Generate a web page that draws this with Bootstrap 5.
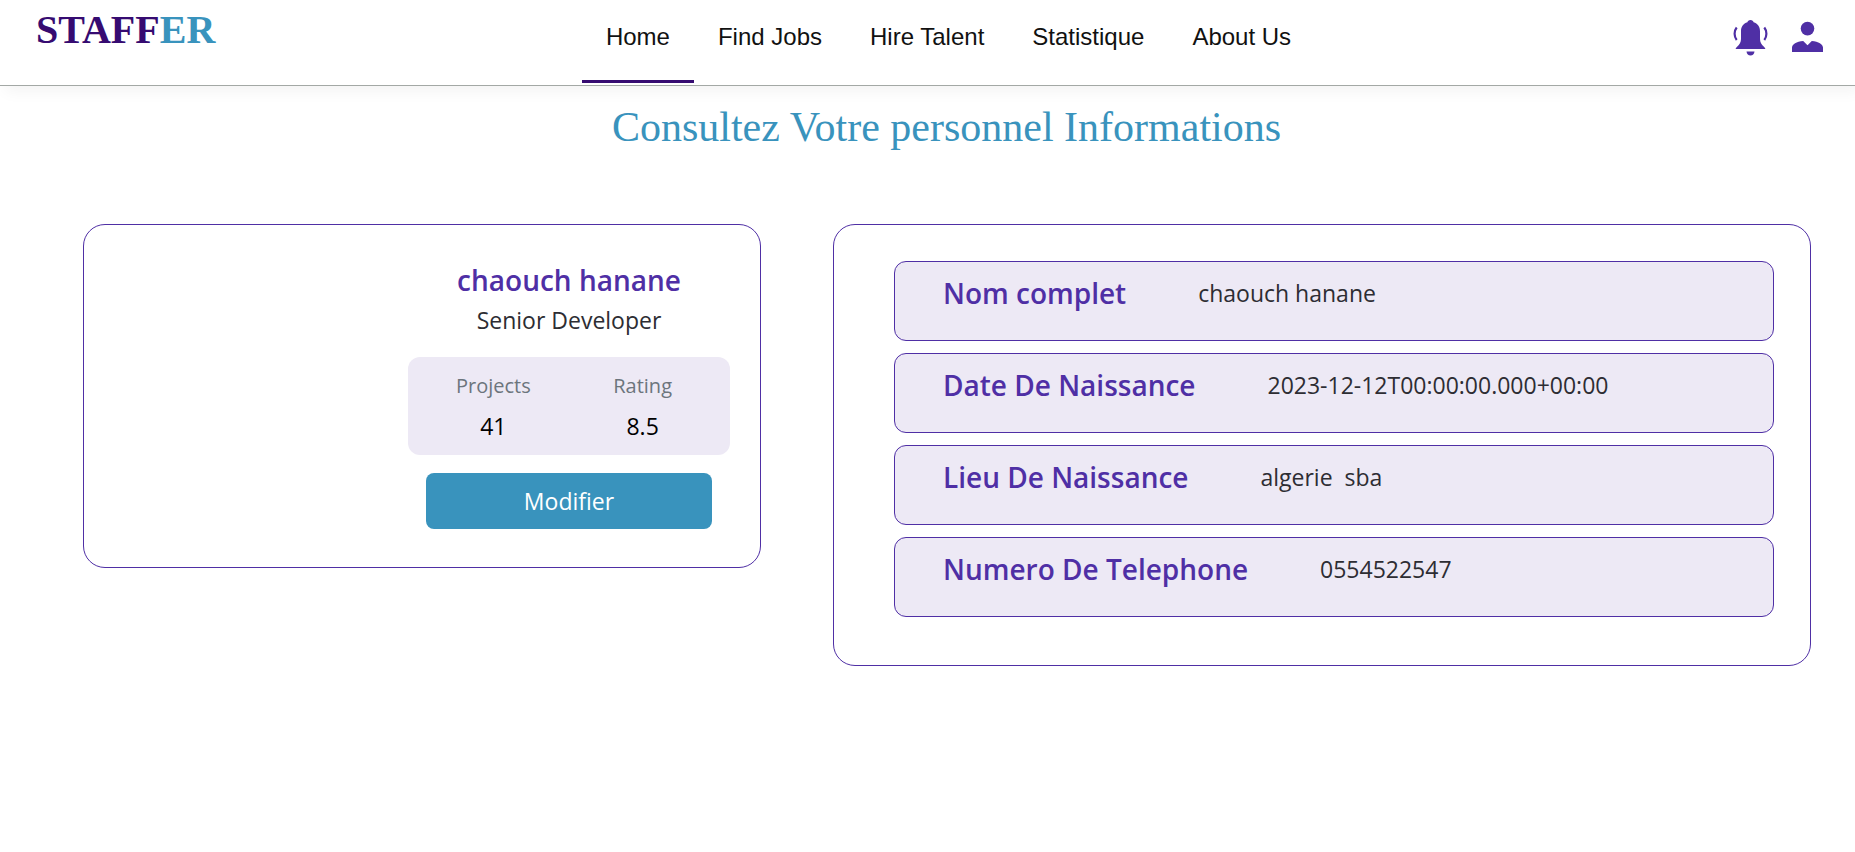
<!DOCTYPE html>
<html lang="fr">
<head>
<meta charset="utf-8">
<meta name="viewport" content="width=device-width, initial-scale=1">
<title>Staffer</title>
<link href="https://cdn.jsdelivr.net/npm/bootstrap@5.3.0/dist/css/bootstrap.min.css" rel="stylesheet">
<style>
  :root { --violet: #4f2fa5; --indigo: #360b71; --sky: #3993bd; --lilac: #ede9f5; }
  body { font-family: "Open Sans", "Noto Sans", sans-serif; color: #2d2d33; background: #fff; }

  .topbar { height: 86px; padding: 0 32px 0 36px; border-bottom: 1px solid #a3a8a5; box-shadow: 5px 5px 15px rgba(0, 0, 0, .05); }
  .topbar-side { flex: 1 1 0; }
  .brand { font: bold 40px/44px "Liberation Serif", serif; color: var(--indigo); margin-top: 8px; }
  .brand span { color: var(--sky); }
  .menu { padding-left: 38px; }
  .menu-link { display: block; height: 83px; padding: 22px 24px 0; font: 24px/30px "Liberation Sans", sans-serif; color: #111; text-decoration: none; border-bottom: 3px solid transparent; white-space: nowrap; }
  .menu-link.active { border-color: var(--indigo); }
  .icon-btn { color: var(--violet); line-height: 0; }

  .page-title { font: 42px/50px "Liberation Serif", serif; color: var(--sky); margin: 16px 0 72px; padding-left: 38px; }
  .panels { display: grid; grid-template-columns: 678fr 978fr; gap: 72px; align-items: start; padding: 0 44px 40px 83px; }
  .panel { border: 1px solid var(--violet); border-radius: 22px; }

  .profile { padding: 35px 30px 38px; }
  .profile-body { width: 322px; }
  .title-text { font-size: 28px; line-height: 40px; font-weight: 600; color: var(--violet); margin: 0; }
  .value-text { font-size: 23px; line-height: 40px; margin: 0; }
  .stats { background: var(--lilac); border-radius: 12px; padding: 8px 58px 8px 48px; margin: 17px 0 18px; }
  .stats dt { font-size: 20px; line-height: 41px; font-weight: 400; color: #6c757d; }
  .stats dd { font-size: 23px; line-height: 41px; color: #000; margin: 0; }
  .btn-edit { --bs-btn-color: #fff; --bs-btn-bg: var(--sky); --bs-btn-hover-color: #fff; --bs-btn-hover-bg: #2f7fa5; --bs-btn-font-size: 23px; --bs-btn-border-width: 0; --bs-btn-border-radius: 8px; width: 286px; height: 56px; }

  .details { padding: 36px 36px 48px 60px; gap: 12px; }
  .detail-row { height: 80px; padding: 11px 48px; gap: 72px; background: var(--lilac); border: 1px solid var(--violet); border-radius: 12px; }
</style>
</head>
<body>
<header class="topbar d-flex">
  <div class="topbar-side">
    <a class="brand d-inline-block text-decoration-none" href="#">STAFF<span>ER</span></a>
  </div>
  <nav class="menu d-flex" aria-label="Menu principal">
    <a class="menu-link active" href="#" aria-current="page">Home</a>
    <a class="menu-link" href="#">Find Jobs</a>
    <a class="menu-link" href="#">Hire Talent</a>
    <a class="menu-link" href="#">Statistique</a>
    <a class="menu-link" href="#">About Us</a>
  </nav>
  <div class="topbar-side d-flex justify-content-end align-items-start gap-4 pt-3">
    <button class="icon-btn btn p-0 border-0" type="button" aria-label="Notifications">
      <svg width="35" height="42" viewBox="0 0 35 42" fill="currentColor">
        <path d="M17.500 4c-1.700 0-2.900 1-3.100 2.300C10.300 7.400 8 10.900 8 15v8c0 3.500-1.500 5.300-3.700 7.500-.9.900-1.600 1.500-1.600 2.500h29.600c0-1-.7-1.600-1.600-2.500C28.500 28.300 27 26.500 27 23v-8c0-4.100-2.300-7.600-6.400-8.700C20.400 5 19.200 4 17.500 4z"/>
        <path d="M13.500 35.500h8c-.3 2.500-1.800 4-4 4s-3.700-1.500-4-4z"/>
        <path d="M3.700 11.500c-2.800 3.500-2.800 9 0 12.500M31.300 11.500c2.800 3.500 2.800 9 0 12.500" fill="none" stroke="currentColor" stroke-width="2.200"/>
      </svg>
    </button>
    <button class="icon-btn btn p-0 border-0" type="button" aria-label="Profil">
      <svg width="31" height="42" viewBox="0 0 31 42" fill="currentColor">
        <circle cx="15.500" cy="12.600" r="6.800"/>
        <path d="M11.200 25 15.500 29.200 19.800 25C26.500 25.500 31 28.600 31 31.500V36H0v-4.500C0 28.600 4.500 25.500 11.200 25z"/>
      </svg>
    </button>
  </div>
</header>

<main>
  <h1 class="page-title text-center">Consultez Votre personnel Informations</h1>
  <div class="panels">
    <section class="panel profile d-flex justify-content-end">
      <div class="profile-body text-center">
        <h2 class="title-text">chaouch hanane</h2>
        <p class="value-text">Senior Developer</p>
        <dl class="stats d-flex justify-content-between">
          <div><dt>Projects</dt><dd>41</dd></div>
          <div><dt>Rating</dt><dd>8.5</dd></div>
        </dl>
        <button class="btn btn-edit" type="button">Modifier</button>
      </div>
    </section>
    <section class="panel details d-grid">
      <div class="detail-row d-flex"><h2 class="title-text">Nom complet</h2><p class="value-text">chaouch hanane</p></div>
      <div class="detail-row d-flex"><h2 class="title-text">Date De Naissance</h2><p class="value-text">2023-12-12T00:00:00.000+00:00</p></div>
      <div class="detail-row d-flex"><h2 class="title-text">Lieu De Naissance</h2><p class="value-text">algerie&nbsp; sba</p></div>
      <div class="detail-row d-flex"><h2 class="title-text">Numero De Telephone</h2><p class="value-text">0554522547</p></div>
    </section>
  </div>
</main>
<script src="https://cdn.jsdelivr.net/npm/bootstrap@5.3.0/dist/js/bootstrap.bundle.min.js"></script>
</body>
</html>
